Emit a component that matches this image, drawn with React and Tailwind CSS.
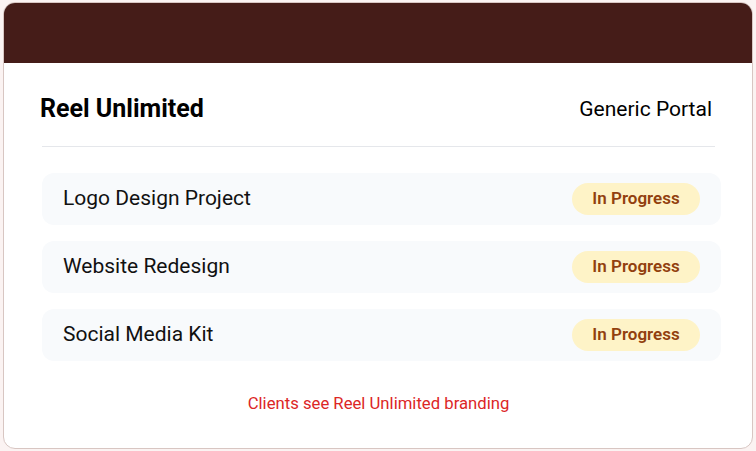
const projects = ["Logo Design Project", "Website Redesign", "Social Media Kit"];

export default function App() {
  return (
    <div
      className="h-screen bg-[#fbf3f2] pt-[2px] pl-[3px] pr-[3px] pb-[2px]"
      style={{ fontFamily: "Roboto, 'Liberation Sans', sans-serif" }}
    >
      <div className="flex h-[447px] flex-col overflow-hidden rounded-xl border border-[#d8c6c2] bg-white">
        <div className="h-[60px] shrink-0 bg-[#451c18]" />

        <div className="pt-[31px] pl-[36px] pr-[31px]">
          <div className="mr-[9px] flex items-center justify-between">
            <h1 className="text-[25px] font-bold leading-[30px] text-black">Reel Unlimited</h1>
            <span className="text-[21px] leading-[30px] text-black">Generic Portal</span>
          </div>
          <div className="mt-[22px] ml-[2px] mr-[6px] h-px bg-[#e5e7eb]" />

          <div className="mt-[26px] ml-[2px] flex flex-col gap-4">
            {projects.map((name) => (
              <div
                key={name}
                className="flex h-[52px] items-center justify-between rounded-xl bg-[#f8fafc] pl-[21px] pr-[21px]"
              >
                <span className="text-[21px] text-[#111]">{name}</span>
                <span className="flex h-8 w-32 items-center justify-center rounded-full bg-[#fef3c7] text-[17px] font-semibold text-[#92400e]">
                  In Progress
                </span>
              </div>
            ))}
          </div>

          <p className="mt-8 ml-[2px] mr-[6px] text-center text-[16.7px] leading-[22px] text-[#dc2626]">
            Clients see Reel Unlimited branding
          </p>
        </div>
      </div>
    </div>
  );
}
